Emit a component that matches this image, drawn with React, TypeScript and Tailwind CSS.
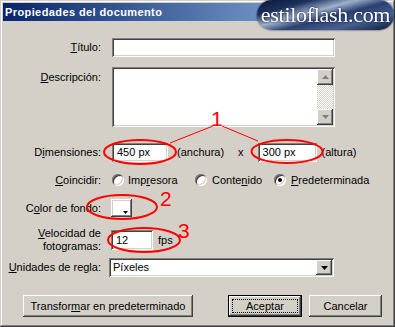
import React from 'react';

const sunken =
  'bg-white shadow-[inset_1px_1px_#808080,inset_-1px_-1px_#ffffff,inset_2px_2px_#404040,inset_-2px_-2px_#d4d0c8]';
const raised =
  'bg-[#d4d0c8] shadow-[inset_-1px_-1px_#404040,inset_1px_1px_#ffffff,inset_-2px_-2px_#808080,inset_2px_2px_#d4d0c8]';

const Radio: React.FC<{ checked?: boolean }> = ({ checked }) => (
  <span className="relative w-[12px] h-[12px] rounded-full bg-white shrink-0 shadow-[inset_1px_1px_#808080,inset_-1px_-1px_#ffffff,inset_2px_2px_#404040,inset_-2px_-2px_#d4d0c8] flex items-center justify-center">
    {checked && <span className="w-[4px] h-[4px] rounded-full bg-black" />}
  </span>
);

const Arrow: React.FC<{ up?: boolean }> = ({ up }) => (
  <svg width="7" height="4" viewBox="0 0 7 4">
    {up ? <path d="M3.5 0 L7 4 L0 4 Z" fill="#808080" /> : <path d="M0 0 L7 0 L3.5 4 Z" fill="#808080" />}
  </svg>
);

export default function App() {
  return (
    <div
      className="relative w-[395px] h-[327px] bg-[#d4d0c8] text-[11px] text-black overflow-hidden shadow-[inset_-1px_-1px_#404040,inset_1px_1px_#d4d0c8,inset_-2px_-2px_#808080,inset_2px_2px_#ffffff] p-[3px]"
      style={{ fontFamily: '"Liberation Sans", Arial, sans-serif' }}
    >
      {/* Title bar */}
      <div className="h-[18px] bg-gradient-to-r from-[#0a246a] to-[#a6caf0] flex items-center pl-[2px]">
        <span className="text-white font-bold text-[11px] tracking-[0.4px]">Propiedades del documento</span>
      </div>

      {/* Título */}
      <div className="flex items-center mt-[17px]">
        <label className="w-[98px] text-right shrink-0"><u>T</u>ítulo:</label>
        <div className={`ml-[11px] w-[223px] h-[19px] ${sunken}`} />
      </div>

      {/* Descripción */}
      <div className="flex items-start mt-[10px]">
        <label className="w-[98px] text-right shrink-0 pt-[2px]"><u>D</u>escripción:</label>
        <div className={`ml-[11px] w-[223px] h-[60px] ${sunken} flex justify-end p-[2px]`}>
          <div className="w-[16px] h-full flex flex-col">
            <div className={`h-[16px] ${raised} flex items-center justify-center`}><Arrow up /></div>
            <div className="flex-1 bg-[image:repeating-conic-gradient(#d4d0c8_0_25%,#ffffff_0_50%)] bg-[length:2px_2px]" />
            <div className={`h-[16px] ${raised} flex items-center justify-center`}><Arrow /></div>
          </div>
        </div>
      </div>

      {/* Dimensiones */}
      <div className="flex items-center mt-[16px]">
        <label className="w-[98px] text-right shrink-0">D<u>i</u>mensiones:</label>
        <div className={`ml-[11px] w-[56px] h-[19px] ${sunken} flex items-center pl-[5px]`}>450 px</div>
        <span className="ml-[9px]">(anchura)</span>
        <span className="ml-[14px]">x</span>
        <div className={`ml-[14px] w-[59px] h-[19px] ${sunken} flex items-center pl-[5px]`}>300 px</div>
        <span className="ml-[5px]">(altura)</span>
      </div>

      {/* Coincidir */}
      <div className="flex items-center mt-[11px] h-[14px]">
        <label className="w-[98px] text-right shrink-0"><u>C</u>oincidir:</label>
        <div className="ml-[11px] flex items-center">
          <span className="w-[83px] flex items-center gap-[4px]"><Radio /><span>Imp<u>r</u>esora</span></span>
          <span className="w-[79px] flex items-center gap-[5px]"><Radio /><span>Conte<u>n</u>ido</span></span>
          <span className="flex items-center gap-[5px]"><Radio checked /><span><u>P</u>redeterminada</span></span>
        </div>
      </div>

      {/* Color de fondo */}
      <div className="flex items-center mt-[12px]">
        <label className="w-[98px] text-right shrink-0">C<u>o</u>lor de fondo:</label>
        <div className="ml-[10px] w-[21px] h-[18px] bg-white shadow-[inset_-1px_-1px_#404040,inset_1px_1px_#ffffff,inset_-2px_-2px_#808080,inset_2px_2px_#d4d0c8] relative">
          <div className="absolute left-[3px] top-[3px] w-[15px] h-[12px] bg-white" />
          <svg className="absolute right-[4px] bottom-[3px]" width="5" height="3" viewBox="0 0 5 3">
            <path d="M0 0 L5 0 L2.5 3 Z" fill="#000" />
          </svg>
        </div>
      </div>

      {/* Velocidad */}
      <div className="flex items-center mt-[10px]">
        <label className="w-[98px] text-right shrink-0 leading-[13px]">
          <u>V</u>elocidad de<br />fotogramas:
        </label>
        <div className={`ml-[10px] w-[42px] h-[20px] ${sunken} flex items-center pl-[5px]`}>12</div>
        <span className="ml-[5px]">fps</span>
      </div>

      {/* Unidades */}
      <div className="flex items-center mt-[5px]">
        <label className="w-[98px] text-right shrink-0"><u>U</u>nidades de regla:</label>
        <div className={`ml-[8px] w-[225px] h-[19px] ${sunken} flex items-center justify-between p-[2px]`}>
          <span className="pl-[2px]">Píxeles</span>
          <div className={`w-[16px] h-[15px] ${raised} flex items-center justify-center`}>
            <svg width="7" height="4" viewBox="0 0 7 4"><path d="M0 0 L7 0 L3.5 4 Z" fill="#000" /></svg>
          </div>
        </div>
      </div>

      {/* Buttons */}
      <div className="flex items-center mt-[18px] ml-[20px]">
        <button className={`w-[170px] h-[22px] ${raised}`}>Transfor<u>m</u>ar en predeterminado</button>
        <button className="ml-[35px] w-[74px] h-[22px] border border-black bg-[#d4d0c8] shadow-[inset_-1px_-1px_#404040,inset_1px_1px_#ffffff,inset_-2px_-2px_#808080,inset_2px_2px_#d4d0c8] p-[3px]">
          <span className="block w-full h-full border border-dotted border-black leading-[12px]">Aceptar</span>
        </button>
        <button className={`ml-[7px] w-[73px] h-[22px] ${raised}`}>Cancelar</button>
      </div>

      {/* Logo */}
      <div className="absolute left-[257px] top-0 w-[137px] h-[30px] rounded-[15px] bg-[linear-gradient(165deg,#0b1736_0%,#1c2f5c_22%,#9fb0cc_40%,#2a4070_55%,#46608f_75%,#0b1736_100%)] flex items-center justify-center shadow-[0_0_2px_#0b1736]">
        <span
          className="text-white text-[22px] leading-none tracking-[-0.3px] drop-shadow-[0_0_1px_#0b1736]"
          style={{ fontFamily: '"Liberation Serif", "Times New Roman", serif' }}
        >
          estiloflash.com
        </span>
      </div>

      {/* Annotations */}
      <svg className="absolute inset-0 pointer-events-none" width="395" height="327" viewBox="0 0 395 327">
        <g fill="none" stroke="#ff0000">
          <ellipse cx="140" cy="152" rx="36" ry="12" strokeWidth="2" />
          <ellipse cx="287" cy="151.5" rx="35.5" ry="11.5" strokeWidth="2" />
          <ellipse cx="122" cy="207" rx="35" ry="12" strokeWidth="2" />
          <ellipse cx="144" cy="240" rx="36" ry="12" strokeWidth="2" />
          <line x1="213" y1="126" x2="170" y2="143" strokeWidth="1" />
          <line x1="222" y1="126" x2="258" y2="141" strokeWidth="1" />
        </g>
        <g fill="#ff0000" fontFamily='"Liberation Sans", Arial, sans-serif' fontSize="21">
          <text x="211" y="126">1</text>
          <text x="160" y="206">2</text>
          <text x="178" y="238">3</text>
        </g>
      </svg>
    </div>
  );
}
